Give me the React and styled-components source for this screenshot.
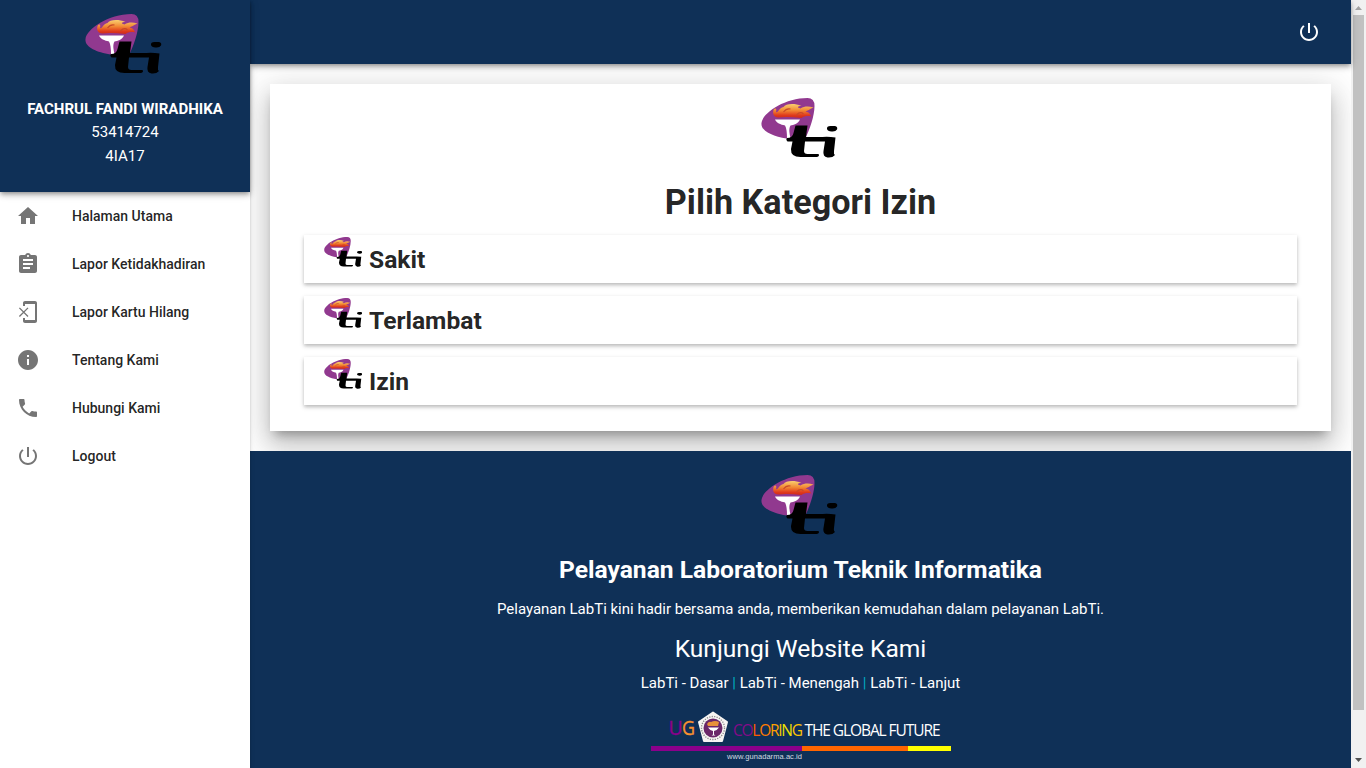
import React from "react";
import styled, { createGlobalStyle, css } from "styled-components";

const Global = createGlobalStyle`
  * { box-sizing: border-box; }
  body { margin: 0; background: #fff; color: rgba(0,0,0,.87); font: 15px/22.5px Roboto, sans-serif; }
  h4, h5, p { margin: 0; }
  a { color: inherit; text-decoration: none; }
`;
const navy = "#0f3057";
const depth2 = css`box-shadow: 0 4px 5px 0 rgba(0,0,0,.14), 0 1px 10px 0 rgba(0,0,0,.12), 0 2px 4px -1px rgba(0,0,0,.3);`;
const depth1 = css`box-shadow: 0 2px 2px 0 rgba(0,0,0,.14), 0 1px 5px 0 rgba(0,0,0,.12), 0 3px 1px -2px rgba(0,0,0,.2);`;

const Page = styled.div`display: flex; height: 768px; overflow: hidden;`;
const SideNav = styled.aside`width: 250px; flex: none; background: #fff; position: relative; z-index: 2; ${depth1}`;
const Profile = styled.div`
  height: 192px; padding-top: 12px; background: ${navy}; color: #fff; ${depth2}
  display: flex; flex-direction: column; align-items: center; line-height: 24px;
  svg { margin-bottom: 22px; }
  span:nth-of-type(1) { line-height: 22px; }
`;
const MenuItem = styled.a`
  display: flex; align-items: center; gap: 32px; height: 48px; padding-left: 16px;
  font-size: 14px; font-weight: 500;
  svg { width: 24px; height: 24px; fill: #757575; }
`;
const Main = styled.div`flex: 1; display: flex; flex-direction: column;`;
const TopBar = styled.header`
  height: 64px; flex: none; background: ${navy}; ${depth2} position: relative; z-index: 1;
  display: flex; align-items: center; justify-content: flex-end; padding-right: 30px;
  svg { width: 24px; height: 24px; fill: #fff; }
`;
const Card = styled.section`
  height: 347px; flex: none; margin: 20px; padding: 12px 34px 0; background: #fff;
  display: flex; flex-direction: column; align-items: center;
  box-shadow: 0 16px 24px 2px rgba(0,0,0,.14), 0 6px 30px 5px rgba(0,0,0,.12), 0 8px 10px -5px rgba(0,0,0,.3);
`;
const Title = styled.h4`font-size: 34.2px; line-height: 38px; font-weight: 700; margin: 23px 0 14px;`;
const Options = styled.div`align-self: stretch; display: flex; flex-direction: column; gap: 13px;`;
const Option = styled.a`
  height: 48px; display: flex; align-items: flex-start; padding: 1px 20px; gap: 5px;
  box-shadow: 0 2px 5px 0 rgba(0,0,0,.16), 0 2px 3px 0 rgba(0,0,0,.14);
  font-size: 24.6px; font-weight: 700; line-height: 48px;
`;
const Footer = styled.footer`
  flex: 1; position: relative; background: ${navy}; color: #fff; padding-top: 22px;
  display: flex; flex-direction: column; align-items: center;
`;
const Heading = styled.h5`
  font-size: 24.6px; line-height: 27px; font-weight: ${(p) => (p.$bold ? 700 : 400)};
  margin-top: ${(p) => (p.$bold ? 19 : 0)}px;
`;
const Lead = styled.p`margin: 15px 0 14px;`;
const Links = styled.p`margin: 10px 0 15px; a { color: #fff; } span { color: #00acc1; }`;
const Scrollbar = styled.div`
  width: 15px; flex: none; background: #f1f1f1; display: flex; flex-direction: column; align-items: center;
`;
const Arrow = styled.svg`width: 15px; height: 15px; flex: none; fill: ${(p) => (p.$off ? "#a3a3a3" : "#505050")};`;
const Thumb = styled.div`width: 11px; height: 695px; background: #c1c1c1; margin-bottom: 43px; flex: none;`;

const icons = {
  home: "M10 20v-6h4v6h5v-8h3L12 3 2 12h3v8z",
  assignment: "M19 3h-4.18C14.4 1.84 13.3 1 12 1c-1.3 0-2.4.84-2.82 2H5c-1.1 0-2 .9-2 2v14c0 1.1.9 2 2 2h14c1.1 0 2-.9 2-2V5c0-1.1-.9-2-2-2zm-7 0c.55 0 1 .45 1 1s-.45 1-1 1-1-.45-1-1 .45-1 1-1zm2 14H7v-2h7v2zm3-4H7v-2h10v2zm0-4H7V7h10v2z",
  info: "M12 2C6.48 2 2 6.48 2 12s4.48 10 10 10 10-4.48 10-10S17.52 2 12 2zm1 15h-2v-6h2v6zm0-8h-2V7h2v2z",
  phone: "M6.62 10.79c1.44 2.83 3.76 5.14 6.59 6.59l2.2-2.2c.27-.27.67-.36 1.02-.24 1.12.37 2.33.57 3.57.57.55 0 1 .45 1 1V20c0 .55-.45 1-1 1-9.39 0-17-7.61-17-17 0-.55.45-1 1-1h3.5c.55 0 1 .45 1 1 0 1.25.2 2.45.57 3.57.11.35.03.74-.25 1.02l-2.2 2.2z",
  power: "M13 3h-2v10h2V3zm4.83 2.17l-1.42 1.42C17.99 7.86 19 9.81 19 12c0 3.87-3.13 7-7 7s-7-3.13-7-7c0-2.19 1.01-4.14 2.58-5.42L6.17 5.17C4.23 6.82 3 9.26 3 12c0 4.97 4.03 9 9 9s9-4.03 9-9c0-2.74-1.23-5.18-3.17-6.83z",
};
function Icon({ name }) {
  if (name === "erase")
    return (
      <svg viewBox="0 0 24 24">
        <path d="M19 1H9c-1.1 0-2 .9-2 2v3h2V4h10v16H9v-2H7v3c0 1.1.9 2 2 2h10c1.1 0 2-.9 2-2V3c0-1.1-.9-2-2-2z" />
        <path d="M3.4 7.9l8.6 8.6M12 7.9l-8.6 8.6" stroke="#757575" strokeWidth="1.3" />
      </svg>
    );
  return <svg viewBox="0 0 24 24"><path d={icons[name]} /></svg>;
}

function Logo({ small }) {
  return (
    <svg width={small ? 40 : 80} height={small ? 32 : 64} viewBox="10.5 6 80 64">
      <defs>
        <linearGradient id="flame" x1="0" y1="0" x2="0" y2="1">
          <stop offset="0" stopColor="#f9cf70" />
          <stop offset=".45" stopColor="#f28a35" />
          <stop offset=".8" stopColor="#e03a1c" />
          <stop offset="1" stopColor="#cc2a1c" />
        </linearGradient>
      </defs>
      <path d="M11 33C12 23 34 8 57 8Q64 8 64 16C64 26 59 40 55 48L36 48.5C22 46 10 41 11 33Z" fill="#91398f" />
      <path d="M23 20C25 17 26.500 19 25.500 22C28 23 28 18 33 17C35 14 43 12.500 51 16C47 16 46 17.500 50 18.500C54 16 58 16 63 17.500C59 19.500 57 20.500 55 21.500C60 23 59 24 61 26.500C57 25.500 54 26 51 28Q36 26.500 28 27.500C23 27 22 24 23 20Z" fill="url(#flame)" />
      <path d="M33 22Q36 18 40 19M46 25Q50 21 53 24" fill="none" stroke="#c84a28" strokeWidth="1.2" />
      <path d="M24.500 29.500H49.500C47.500 34 43 35 40 35.500C38 39 39 43 40 48L36.500 48C36.500 43 36 38 34.500 35.500C30 34.500 26 33 24.500 29.500Z" fill="#fff" />
      <path d="M45 35.500H57L55.500 47H72Q78 46.500 85 47.500L83.500 61Q83 64 84.500 65Q82 68 77 67.500Q72 66.500 73 61L74.500 51.500H54.500L53.500 61Q53.500 64 57 64H68Q69.500 66 66.500 67H50Q40 67 40.500 59L42 51.500H37Q35 49.500 36.500 48Q42 48 43 43Z" fill="#000" />
      <path d="M76.500 39Q76 36 80 36H84.500Q87.500 36.500 86.500 39.500Q85 42 81 41.500Q77 41 76.500 39Z" fill="#000" />
    </svg>
  );
}

function CampusBanner() {
  return (
    <svg width="300" height="52" viewBox="0 0 300 52">
      <g fontFamily="'Open Sans', sans-serif">
        <text x="17.5" y="25.500" fontSize="19.5" fill="#8b008b" stroke="#8b008b" strokeWidth=".4">U</text>
        <text x="31" y="25.500" fontSize="19.5" fill="#f9912f" stroke="#f9912f" strokeWidth=".3" textLength="13" lengthAdjust="spacingAndGlyphs">G</text>
        <text x="82" y="27" fontSize="15.500" textLength="70">
          <tspan fill="#850a89">CO</tspan><tspan fill="#ff5b00">L</tspan><tspan fill="#ff7b00">O</tspan><tspan fill="#ffa000">R</tspan><tspan fill="#f4c900">I</tspan><tspan fill="#eee000">N</tspan><tspan fill="#ffc400">G</tspan>
        </text>
        <text x="153.5" y="27" fontSize="15.500" fill="#fff" textLength="136">THE GLOBAL FUTURE</text>
      </g>
      <path d="M62 3.5L76 13L71 32H53L48 13Z" fill="#f7f5f3" stroke="#f7f5f3" strokeWidth="2" strokeLinejoin="round" />
      <circle cx="62" cy="19" r="11.500" fill="none" stroke="#888" strokeWidth="1.3" strokeDasharray="1.2 1.3" />
      <circle cx="62" cy="19" r="9.500" fill="#6b2769" />
      <path d="M56 15Q58 12 60 13Q64 11 68 13L67 17H57Z" fill="#e8913a" />
      <path d="M57 18.500H68Q66 21.500 63 22V25.500L64.500 26.500H60.500L62 25.500V22Q59 21.500 57 18.500Z" fill="#fff" />
      <path d="M0 37H151V42H0Z" fill="#8b008b" />
      <path d="M151 37H257V42H151Z" fill="#ff6500" />
      <path d="M257 37H300V42H257Z" fill="#ff0" />
      <text x="76" y="49.5" fontSize="7.5" fill="#d5dbe2" fontFamily="Liberation Sans, sans-serif" textLength="75">www.gunadarma.ac.id</text>
    </svg>
  );
}

const menu = [
  ["home", "Halaman Utama"], ["assignment", "Lapor Ketidakhadiran"], ["erase", "Lapor Kartu Hilang"],
  ["info", "Tentang Kami"], ["phone", "Hubungi Kami"], ["power", "Logout"],
];

export default function App() {
  return (
    <Page>
      <Global />
      <SideNav>
        <Profile>
          <Logo />
          <span><b>FACHRUL FANDI WIRADHIKA</b></span>
          <span>53414724</span>
          <span>4IA17</span>
        </Profile>
        {menu.map(([icon, label]) => <MenuItem key={icon}><Icon name={icon} />{label}</MenuItem>)}
      </SideNav>
      <Main>
        <TopBar><Icon name="power" /></TopBar>
        <Card>
          <Logo />
          <Title>Pilih Kategori Izin</Title>
          <Options>
            {["Sakit", "Terlambat", "Izin"].map((o) => <Option key={o}><Logo small />{o}</Option>)}
          </Options>
        </Card>
        <Footer>
          <Logo />
          <Heading $bold>Pelayanan Laboratorium Teknik Informatika</Heading>
          <Lead>Pelayanan LabTi kini hadir bersama anda, memberikan kemudahan dalam pelayanan LabTi.</Lead>
          <Heading>Kunjungi Website Kami</Heading>
          <Links><a>LabTi - Dasar</a> <span>|</span> <a>LabTi - Menengah</a> <span>|</span> <a>LabTi - Lanjut</a></Links>
          <CampusBanner />
        </Footer>
      </Main>
      <Scrollbar>
        <Arrow $off viewBox="0 0 15 15"><path d="M4 10L7.5 6L11 10Z" /></Arrow>
        <Thumb />
        <Arrow viewBox="0 0 15 15"><path d="M4 5L7.5 9L11 5Z" /></Arrow>
      </Scrollbar>
    </Page>
  );
}
